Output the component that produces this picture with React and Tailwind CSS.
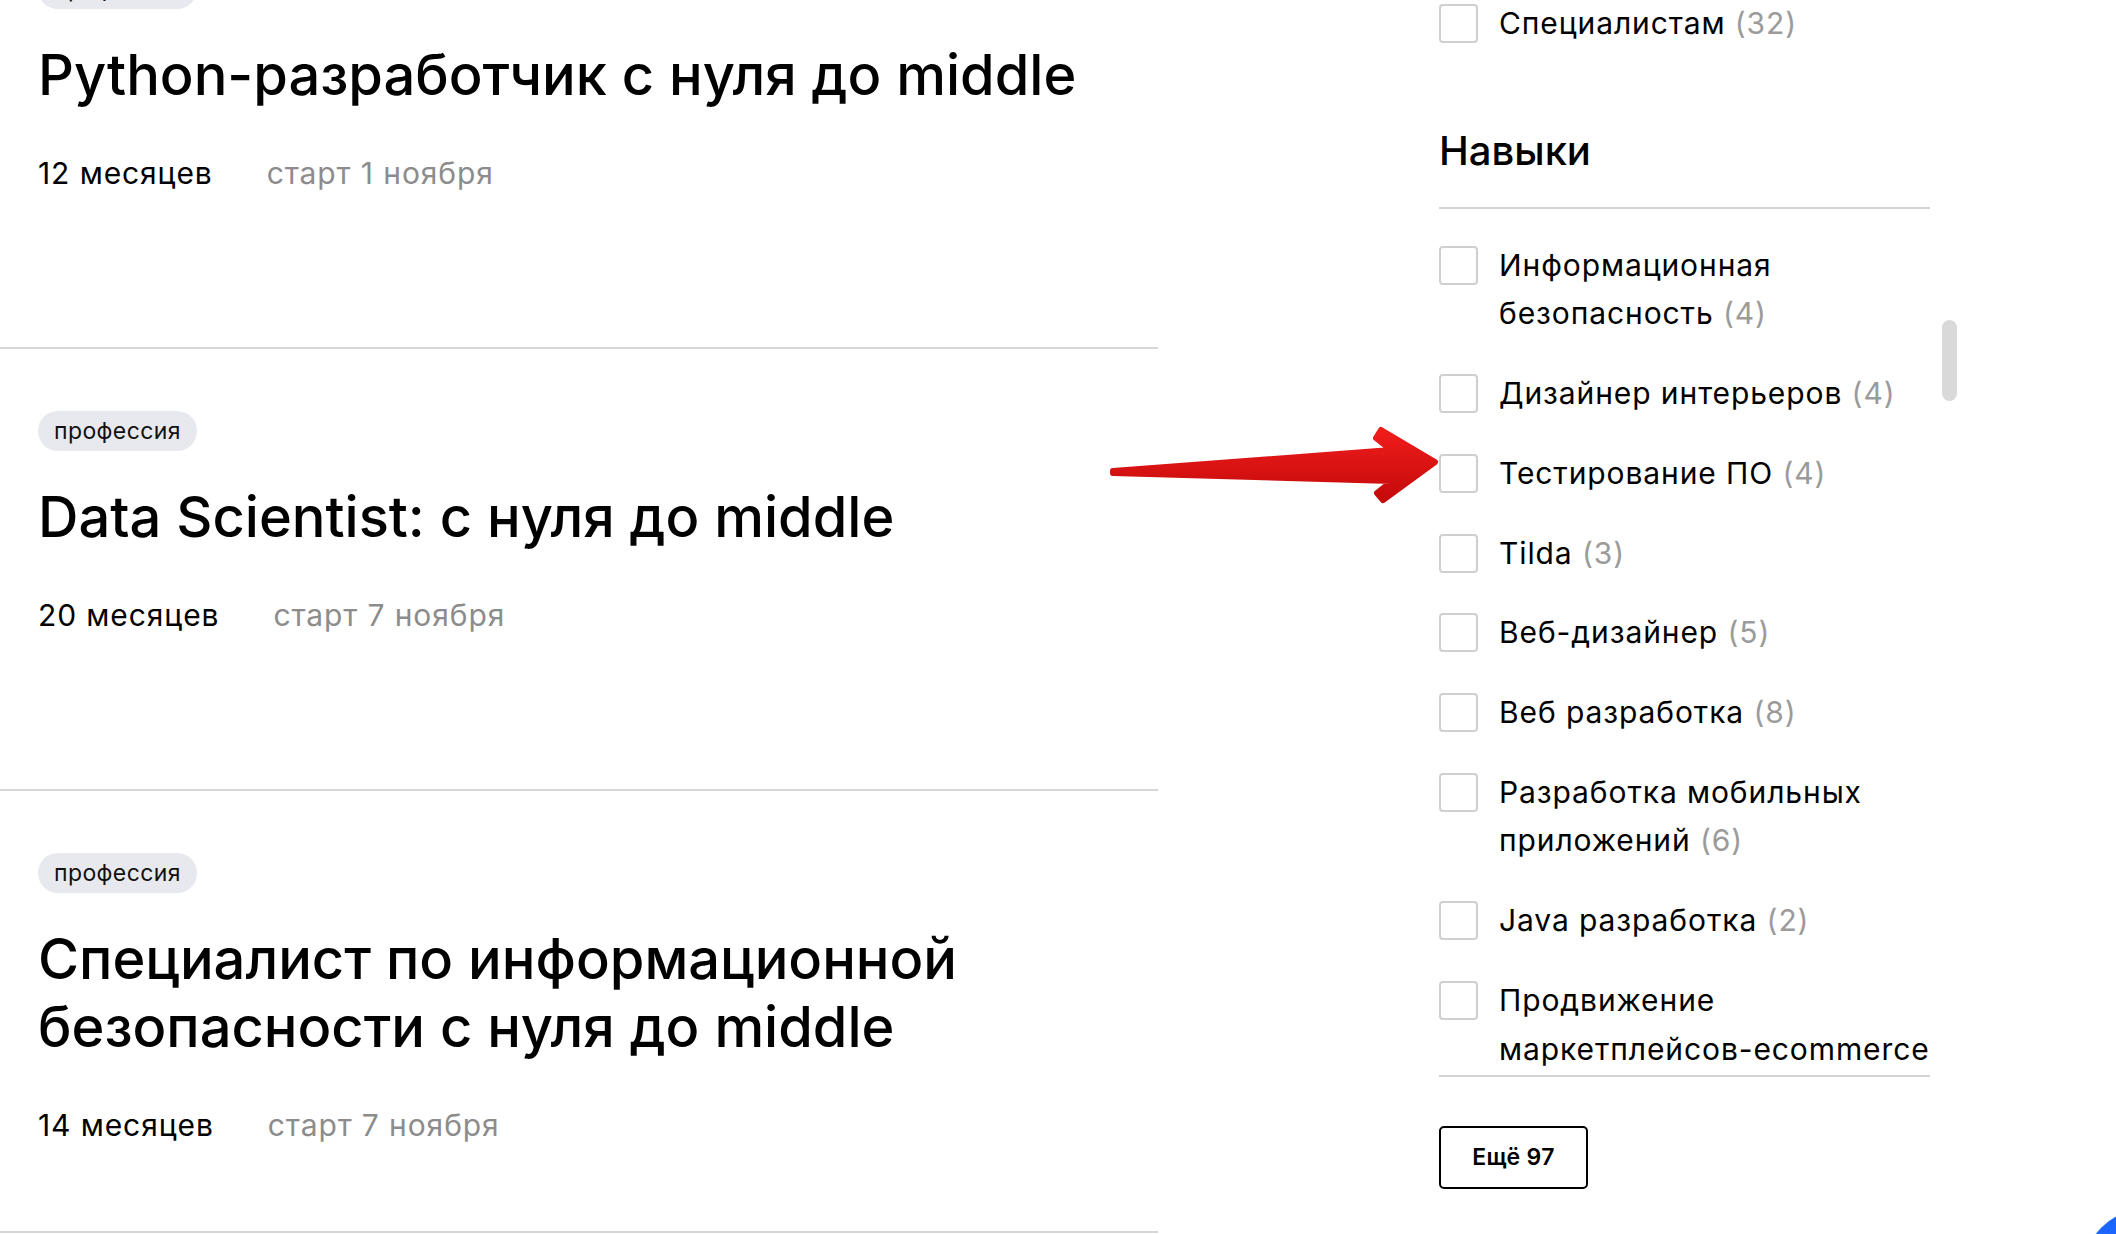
import React from 'react';

const courses = [
    { title: ['Python-разработчик с нуля до middle'], months: '12 месяцев', start: 'старт 1 ноября' },
    { title: ['Data Scientist: с нуля до middle'], months: '20 месяцев', start: 'старт 7 ноября' },
    { title: ['Специалист по информационной', 'безопасности с нуля до middle'], months: '14 месяцев', start: 'старт 7 ноября' },
];

const skills = [
    { name: 'Информационная безопасность', count: 4 },
    { name: 'Дизайнер интерьеров', count: 4 },
    { name: 'Тестирование ПО', count: 4 },
    { name: 'Tilda', count: 3 },
    { name: 'Веб-дизайнер', count: 5 },
    { name: 'Веб разработка', count: 8 },
    { name: 'Разработка мобильных приложений', count: 6 },
    { name: 'Java разработка', count: 2 },
    { name: <>Продвижение <span className="whitespace-nowrap">маркетплейсов-ecommerce</span></>, key: 'market', count: 3 },
];

const Checkbox = () => (
    <span className="mt-[5px] block h-[39px] w-[39px] shrink-0 rounded-[4px] border-2 border-[#cfcfcf] bg-white" />
);

const FilterRow = ({ name, count }) => (
    <label className="flex items-start gap-[21px]">
        <Checkbox />
        <span className="text-[30px] leading-[48.6px] tracking-[0.9px] text-black">
            {name} <span className="text-[#9b9b9b]">({count})</span>
        </span>
    </label>
);

const CourseCard = ({ course }) => (
    <div className="h-[442px] border-t-2 border-[#d6d6d6] pl-[38px]">
        <div className="mt-[62px] inline-flex h-[40px] items-center rounded-full bg-[#e8e9ee] px-[16px] text-[23px] tracking-[0.4px] text-[#111]">
            профессия
        </div>
        <h2 className="mt-[32px] text-[56px] font-medium leading-[68px] text-black">
            {course.title.map((line) => (
                <div key={line}>{line}</div>
            ))}
        </h2>
        <div className="mt-[46px] flex text-[30px] leading-[36px] tracking-[0.9px]">
            <span className="text-black">{course.months}</span>
            <span className="ml-[54px] text-[#8c8c8c]">{course.start}</span>
        </div>
    </div>
);

const App = () => {
    return (
        <div className="relative h-[1234px] w-[2116px] overflow-hidden bg-white font-['Inter',sans-serif]">
            <div className="flex">
                {/* course list */}
                <div className="-mt-[95px] w-[1158px]">
                    {courses.map((c) => (
                        <CourseCard key={c.months + c.start} course={c} />
                    ))}
                    <div className="border-t-2 border-[#d6d6d6]" />
                </div>

                {/* filters */}
                <div className="ml-[281px] w-[491px]">
                    <div className="-mt-[1px]">
                        <FilterRow name="Специалистам" count={32} />
                    </div>
                    <h3 className="mt-[79px] text-[40px] font-medium leading-[48px] text-black">Навыки</h3>
                    <div className="mt-[32px] h-[870px] overflow-hidden border-y-2 border-[#d4d4d4] pt-[32px]">
                        <div className="flex flex-col gap-[31.2px]">
                            {skills.map((s) => (
                                <FilterRow key={s.key || s.name} name={s.name} count={s.count} />
                            ))}
                        </div>
                    </div>
                    <button className="mt-[49px] flex h-[63px] w-[149px] items-center justify-center rounded-[5px] border-2 border-black text-[23px] font-semibold tracking-[0.3px] text-black">
                        Ещё 97
                    </button>
                </div>
            </div>

            {/* scrollbar thumb */}
            <div className="absolute left-[1942px] top-[320px] h-[81px] w-[15px] rounded-full bg-[#d9d9d9]" />

            {/* red arrow */}
            <svg className="absolute left-[1105px] top-[420px]" width="345" height="90" viewBox="0 0 345 90">
                <defs>
                    <linearGradient id="arrowRed" x1="0" y1="0" x2="0" y2="1">
                        <stop offset="0" stopColor="#f01c1c" />
                        <stop offset="1" stopColor="#c40a0a" />
                    </linearGradient>
                </defs>
                <path
                    d="M8 51 L286 30 L271 18 L276 10 L330 42 L278 80 L272 73 L287 61 L8 53 Z"
                    fill="url(#arrowRed)"
                    stroke="url(#arrowRed)"
                    strokeWidth="6"
                    strokeLinejoin="round"
                />
            </svg>

            {/* chat widget peeking */}
            <div className="absolute left-[2083px] top-[1209px] h-[126px] w-[126px] rounded-full bg-[#1a66ff]" />
        </div>
    );
};

export default App;
